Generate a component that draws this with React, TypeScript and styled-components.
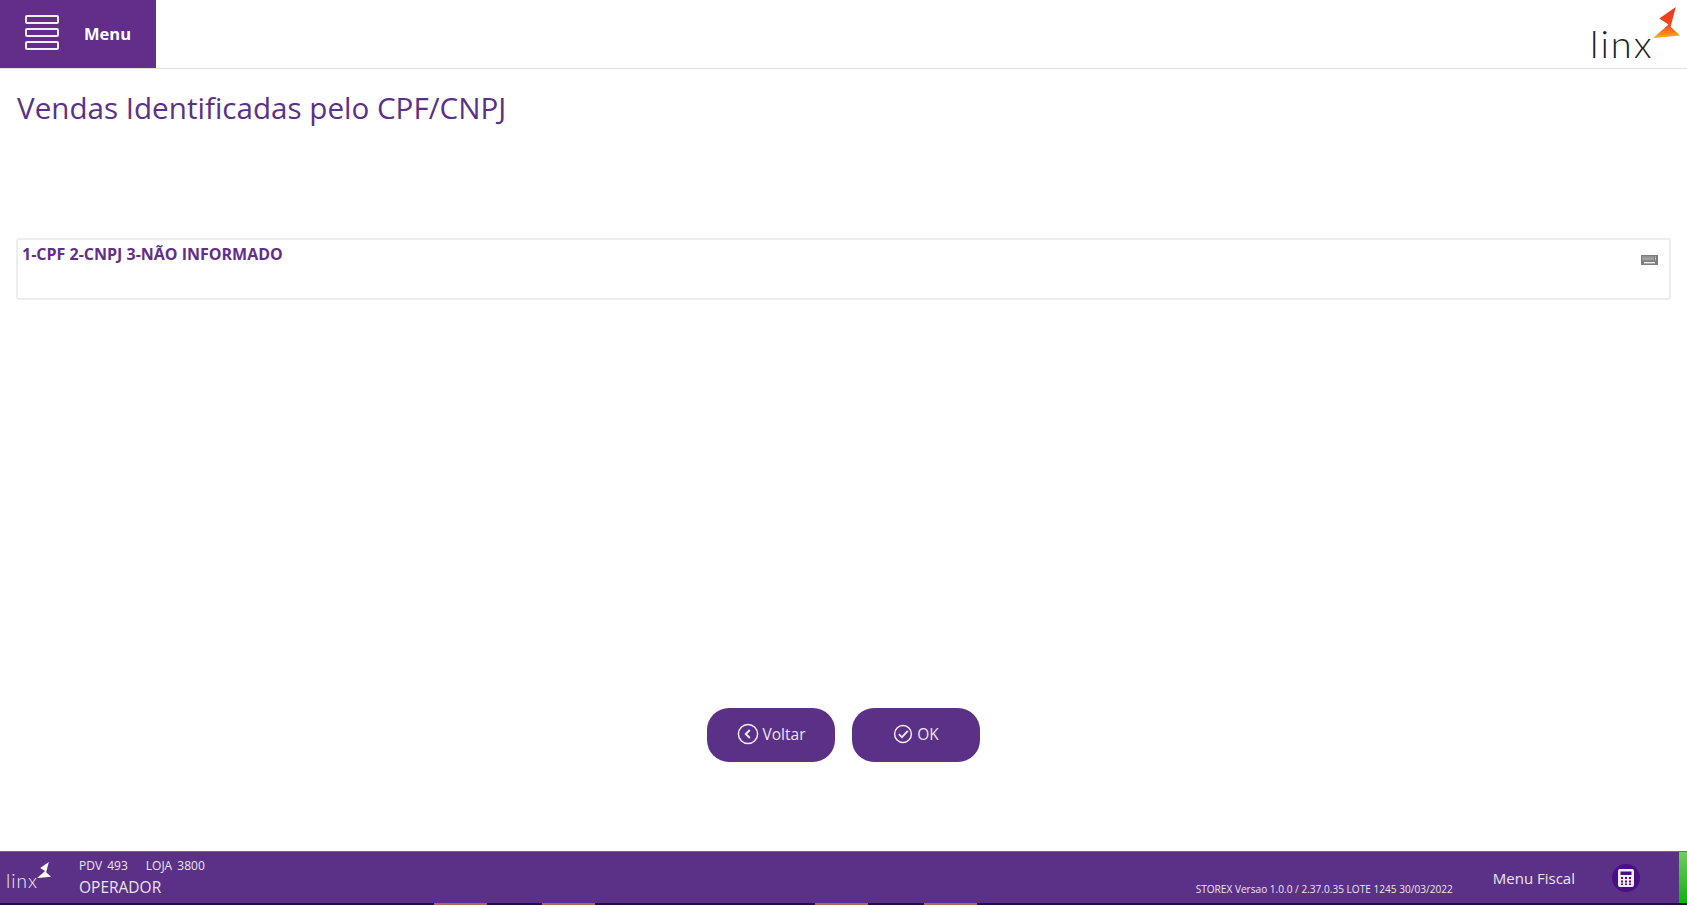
import React from "react";
import styled, { createGlobalStyle } from "styled-components";

const GlobalStyle = createGlobalStyle`
  html, body {
    margin: 0;
    padding: 0;
    height: 100%;
    background: #ffffff;
    overflow: hidden;
    font-family: "Open Sans", "Noto Sans", sans-serif;
  }
  * { box-sizing: border-box; }
`;

const Star = ({ light, size }: { light?: boolean; size: number }) => (
  <svg width={size} height={size * 1.15} viewBox="0 0 26 30">
    <defs>
      <linearGradient id="starFill" x1="0.6" y1="0" x2="0.6" y2="1">
        <stop offset="0" stopColor="#e8391f" />
        <stop offset="0.6" stopColor="#ee4a1d" />
        <stop offset="1" stopColor="#fbb01f" />
      </linearGradient>
    </defs>
    <path
      d="M22 0 L6 11 L15 17 L0 30 L26 27.5 L17 19 Z"
      fill={light ? "#ffffff" : "url(#starFill)"}
    />
  </svg>
);

const App = () => {
  return (
    <Page>
      <GlobalStyle />
      <Header>
        <MenuButton>
          <MenuIcon>
            <MenuBar />
            <MenuBar />
            <MenuBar />
          </MenuIcon>
          <MenuLabel>Menu</MenuLabel>
        </MenuButton>
        <HeaderLogo>
          <LogoText>linx</LogoText>
          <HeaderStar>
            <Star size={27} />
          </HeaderStar>
        </HeaderLogo>
      </Header>

      <Title>Vendas Identificadas pelo CPF/CNPJ</Title>

      <InputCard>
        <InputLabel>1-CPF 2-CNPJ 3-NÃO INFORMADO</InputLabel>
        <KeyboardIcon viewBox="0 0 17 10" width="17" height="10">
          <rect width="17" height="10" fill="#7d7d7d" />
          <path
            d="M2 1.500v4M4 1.500v4M6 1.500v4M8 1.500v4M10 1.500v4M12 1.500v4M14.500 1.500v4"
            stroke="#d6d6d6"
            strokeWidth="1"
            strokeDasharray="1 .4"
          />
          <rect x="3" y="7" width="11" height="1.4" fill="#f2f2f2" />
        </KeyboardIcon>
      </InputCard>

      <Actions>
        <ActionButton>
          <svg width="22" height="22" viewBox="0 0 22 22" fill="none" stroke="#f1ecf6">
            <circle cx="11" cy="11" r="9.6" strokeWidth="1.5" />
            <path d="M12.800 7 L8.800 11 L12.800 15" strokeWidth="2" />
          </svg>
          Voltar
        </ActionButton>
        <ActionButton>
          <svg width="20" height="20" viewBox="0 0 20 20" fill="none" stroke="#f1ecf6">
            <circle cx="10" cy="10" r="8.400" strokeWidth="1.5" />
            <path d="M5.800 10.200 L9 13.200 L14.800 6.800" strokeWidth="1.800" />
          </svg>
          OK
        </ActionButton>
      </Actions>

      <Footer>
        <FooterBar>
          <FooterLogo>
            <FooterLogoText>linx</FooterLogoText>
            <FooterStar>
              <Star light size={14} />
            </FooterStar>
          </FooterLogo>
          <FooterInfo>
            <FooterIds>
              <span>PDV 493</span>
              <span>LOJA 3800</span>
            </FooterIds>
            <Operator>OPERADOR</Operator>
          </FooterInfo>
          <Version>STOREX Versao 1.0.0 / 2.37.0.35 LOTE 1245 30/03/2022</Version>
          <FiscalMenu>Menu Fiscal</FiscalMenu>
          <CalcButton>
            <svg width="16" height="18" viewBox="0 0 16 18">
              <rect width="16" height="18" rx="2" fill="#f1ecf6" />
              <rect x="2.500" y="2.500" width="11" height="3.500" fill="#4d0d85" />
              <path
                d="M3 8h2v2H3zM7 8h2v2H7zM11 8h2v2h-2zM3 11.500h2v2H3zM7 11.500h2v2H7zM11 11.500h2v2h-2zM3 14.500h2v1.500H3zM7 14.500h2v1.500H7zM11 14.500h2v1.500h-2z"
                fill="#4d0d85"
              />
            </svg>
          </CalcButton>
          <StatusStrip />
        </FooterBar>
        <TaskStrip>
          <TaskGap $width={434} />
          <TaskItem />
          <TaskGap $width={55} />
          <TaskItem />
          <TaskGap $width={220} />
          <TaskItem />
          <TaskGap $width={56} />
          <TaskItem />
        </TaskStrip>
      </Footer>
    </Page>
  );
};

const Page = styled.div`
  display: flex;
  flex-direction: column;
  height: 100vh;
  background: #ffffff;
`;

const Header = styled.header`
  display: flex;
  justify-content: space-between;
  flex: none;
  height: 69px;
  border-bottom: 1px solid #e0e0e0;
`;

const MenuButton = styled.div`
  display: flex;
  align-items: center;
  width: 155.500px;
  height: 68px;
  padding-left: 25px;
  background: #632e8a;
`;

const MenuIcon = styled.div`
  display: flex;
  flex-direction: column;
  gap: 4px;
  width: 34px;
  margin-top: -3px;
`;

const MenuBar = styled.div`
  height: 9px;
  border: 2px solid #f3edf7;
  border-radius: 2px;
`;

const MenuLabel = styled.span`
  margin: -2px 0 0 25px;
  color: #ffffff;
  font-size: 16.500px;
  font-weight: 700;
`;

const HeaderLogo = styled.div`
  position: relative;
  width: 96px;
  height: 68px;
  margin-right: 1px;
`;

const LogoText = styled.span`
  position: absolute;
  left: 0;
  top: 19px;
  font-family: "Lato", sans-serif;
  font-weight: 300;
  font-size: 38px;
  line-height: 48px;
  letter-spacing: 2px;
  color: #222222;
`;

const HeaderStar = styled.div`
  position: absolute;
  left: 63px;
  top: 7px;
`;

const Title = styled.h1`
  flex: none;
  margin: 18px 0 0 17px;
  height: 50px;
  color: #5b3187;
  font-size: 29.600px;
  font-weight: 400;
  line-height: 42px;
`;

const InputCard = styled.div`
  display: flex;
  justify-content: space-between;
  flex: none;
  height: 62px;
  margin: 101px 16px 0 16px;
  padding: 3px 6px 0 4px;
  border: 2px solid #ededed;
  border-radius: 3px;
`;

const InputLabel = styled.span`
  color: #632e8a;
  font-size: 16px;
  font-weight: 700;
  line-height: 22px;
`;

const KeyboardIcon = styled.svg`
  margin: 12px 5px 0 0;
`;

const Actions = styled.div`
  display: flex;
  justify-content: center;
  gap: 17px;
  flex: none;
  margin-top: 408px;
`;

const ActionButton = styled.button`
  display: flex;
  align-items: center;
  justify-content: center;
  gap: 4px;
  width: 128px;
  height: 54px;
  padding: 0 0 2px;
  border: none;
  border-radius: 22px;
  background: #5b3087;
  color: #ece5f2;
  font-family: inherit;
  font-size: 15.500px;
`;

const Footer = styled.footer`
  display: flex;
  flex-direction: column;
  margin-top: auto;
  flex: none;
`;

const FooterBar = styled.div`
  display: flex;
  align-items: stretch;
  height: 52px;
  background: #5b3087;
  border-top: 1px solid #7a5aa0;
  color: #ece5f2;
`;

const FooterLogo = styled.div`
  position: relative;
  flex: none;
  width: 79px;
`;

const FooterLogoText = styled.span`
  position: absolute;
  left: 6px;
  top: 17px;
  font-family: "Lato", sans-serif;
  font-weight: 300;
  font-size: 19px;
  line-height: 24px;
  letter-spacing: 1px;
  color: #f2edf6;
`;

const FooterStar = styled.div`
  position: absolute;
  left: 37px;
  top: 9px;
`;

const FooterInfo = styled.div`
  display: flex;
  flex-direction: column;
  padding-top: 6px;
`;

const FooterIds = styled.div`
  display: flex;
  gap: 18px;
  font-size: 12px;
  line-height: 16px;
  word-spacing: 2px;
`;

const Operator = styled.span`
  margin-top: 3px;
  font-size: 15.500px;
  line-height: 20px;
`;

const Version = styled.span`
  margin-left: auto;
  align-self: flex-end;
  padding-bottom: 7px;
  font-size: 10.100px;
  line-height: 14px;
`;

const FiscalMenu = styled.span`
  align-self: center;
  margin-left: 40px;
  font-size: 15px;
`;

const CalcButton = styled.div`
  display: flex;
  align-items: center;
  justify-content: center;
  align-self: center;
  width: 28px;
  height: 28px;
  margin: 0 39px 0 37px;
  border-radius: 50%;
  background: #4d0d85;
`;

const StatusStrip = styled.div`
  flex: none;
  width: 8px;
  background: linear-gradient(#6fce5c, #12b012);
`;

const TaskStrip = styled.div`
  display: flex;
  flex: none;
  height: 2px;
  background: #231040;
`;

const TaskGap = styled.div<{ $width: number }>`
  flex: none;
  width: ${(p) => p.$width}px;
`;

const TaskItem = styled.div`
  flex: none;
  width: 53px;
  background: #ac6a4a;
`;

export default App;
